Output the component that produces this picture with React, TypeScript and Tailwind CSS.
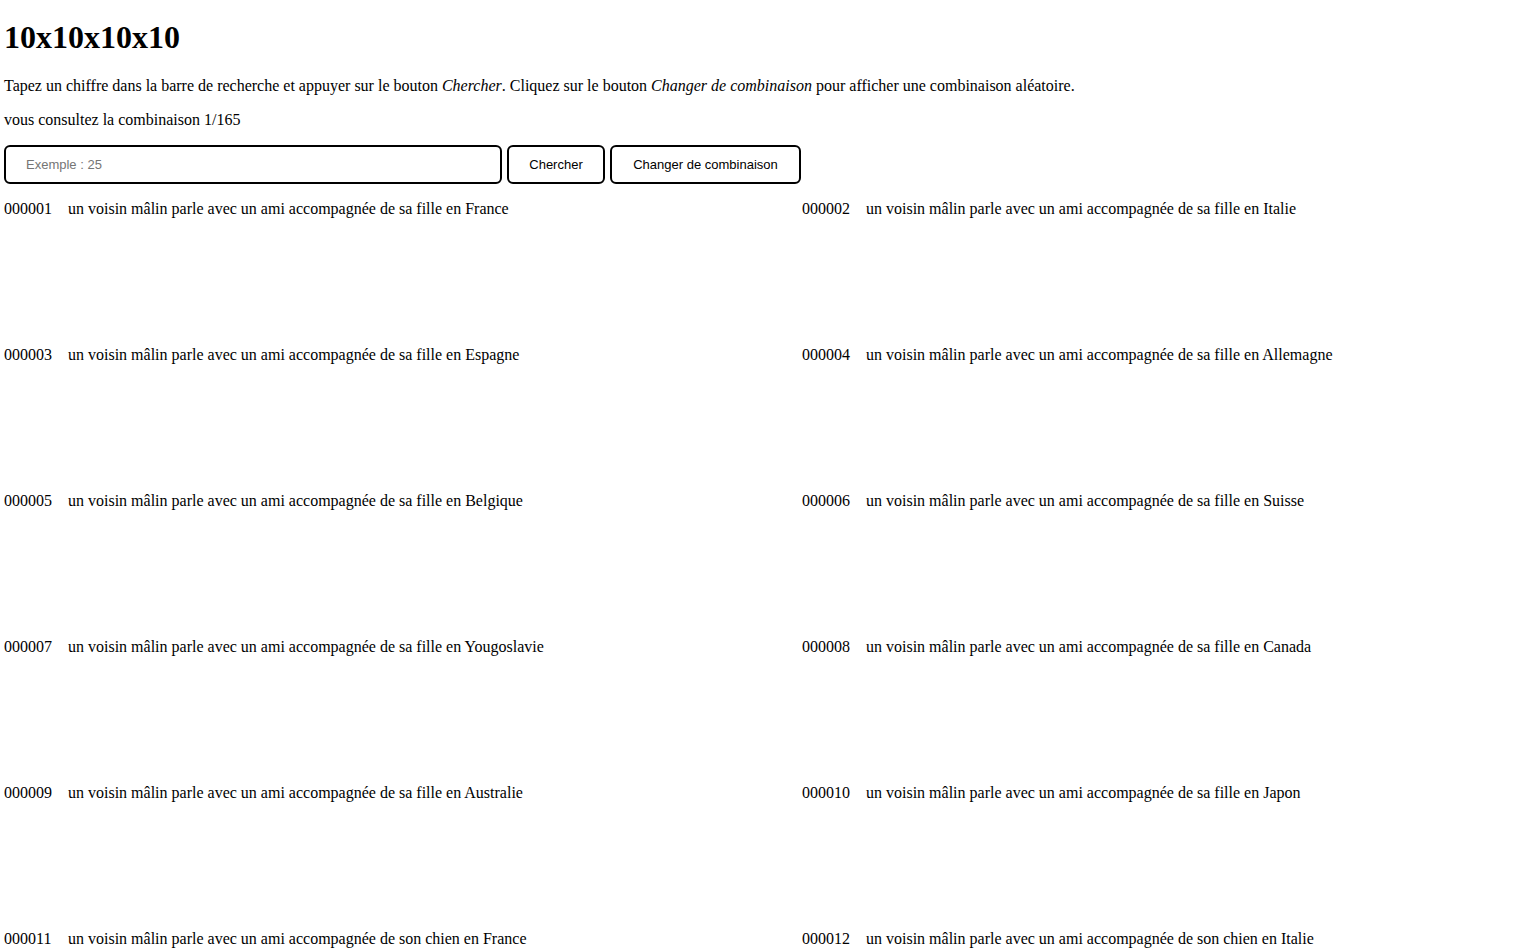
const pays = [
  'France',
  'Italie',
  'Espagne',
  'Allemagne',
  'Belgique',
  'Suisse',
  'Yougoslavie',
  'Canada',
  'Australie',
  'Japon',
]
const compagnons = ['de sa fille', 'de son chien']

const lignes = Array.from({ length: 12 }, (_, i) => ({
  id: String(i + 1).padStart(6, '0'),
  texte: `un voisin mâlin parle avec un ami accompagnée ${
    compagnons[Math.floor(i / pays.length) % compagnons.length]
  } en ${pays[i % pays.length]}`,
}))

export default function App() {
  return (
    <div className="min-h-screen overflow-hidden bg-white px-[4px] font-['Liberation_Serif','Times_New_Roman',serif] text-[16px] leading-[18px] text-black">
      <h1 className="mt-[19px] mb-[21px] text-[32px] font-bold leading-[37px]">10x10x10x10</h1>
      <p className="mb-4">
        Tapez un chiffre dans la barre de recherche et appuyer sur le bouton <em>Chercher</em>. Cliquez sur le
        bouton <em>Changer de combinaison</em> pour afficher une combinaison aléatoire.
      </p>
      <p className="mb-4">vous consultez la combinaison 1/165</p>

      <div className="flex gap-[5px] font-['Liberation_Sans',Arial,sans-serif] text-[13px]">
        <input
          type="text"
          placeholder="Exemple : 25"
          className="h-[39px] w-[498px] rounded-[6px] border-2 border-black px-[20px] outline-none placeholder:text-[#757575]"
        />
        <button className="h-[39px] w-[98px] rounded-[6px] border-2 border-black bg-white">Chercher</button>
        <button className="h-[39px] w-[191px] rounded-[6px] border-2 border-black bg-white">
          Changer de combinaison
        </button>
      </div>

      <div className="mt-[16px] grid grid-cols-[798px_1fr]">
        {lignes.map((l) => (
          <div key={l.id} className="flex h-[146px] items-start">
            <span className="w-[64px] shrink-0">{l.id}</span>
            <span className="whitespace-nowrap">{l.texte}</span>
          </div>
        ))}
      </div>
    </div>
  )
}
